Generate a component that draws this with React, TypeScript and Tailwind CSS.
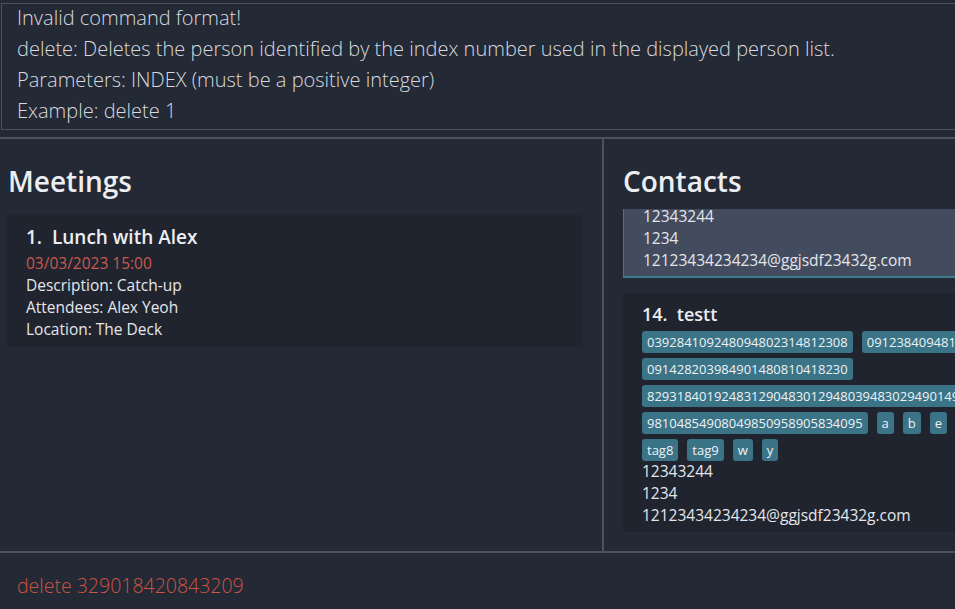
import React from 'react';

const resultLines = [
  'Invalid command format!',
  'delete: Deletes the person identified by the index number used in the displayed person list.',
  'Parameters: INDEX (must be a positive integer)',
  'Example: delete 1',
];

const tagRows: string[][] = [
  ['039284109248094802314812308', '09123840948123094812309481'],
  ['091428203984901480810418230'],
  ['82931840192483129048301294803948302949014923'],
  ['98104854908049850958905834095', 'a', 'b', 'e', 'f'],
  ['tag8', 'tag9', 'w', 'y'],
];

function Tag({ label }: { label: string }) {
  return (
    <span className="shrink-0 rounded-[3px] bg-[#3b7387] px-[5px] text-[13px] leading-[22px] text-[#eef2f4]">
      {label}
    </span>
  );
}

export default function App() {
  return (
    <div className="flex h-[609px] w-[955px] flex-col overflow-hidden bg-[#242936] font-['Open_Sans',sans-serif] text-[#e4e6ea]">
      {/* Result display */}
      <div className="h-[137px] shrink-0 pl-[1px] pt-[3px]">
        <div className="h-[127px] overflow-hidden border-y border-l border-[#4a505c] pl-[15px]">
          <div className="-mt-[2px] text-[20px] font-light leading-[31px] text-[#d8dade]">
            {resultLines.map((line) => (
              <div key={line} className="whitespace-nowrap">
                {line}
              </div>
            ))}
          </div>
        </div>
      </div>

      <div className="h-[2px] shrink-0 bg-[#4b515d]" />

      <div className="flex h-[412px] shrink-0">
        {/* Meetings */}
        <div className="w-[602px] shrink-0">
          <h2 className="pl-[8px] pt-[24px] text-[28px] font-semibold leading-[36px] text-[#eceef1]">
            Meetings
          </h2>
          <div className="ml-[7px] mt-[16px] w-[576px] bg-[#20242f] pb-[7px] pl-[19px] pt-[10px]">
            <div className="whitespace-pre text-[19px] font-semibold leading-[24px] text-[#eceef1]">
              {'1.  Lunch with Alex'}
            </div>
            <div className="mt-[3px] text-[15.5px] leading-[22px]">
              <div className="text-[#c95a4a]">03/03/2023 15:00</div>
              <div>Description: Catch-up</div>
              <div>Attendees: Alex Yeoh</div>
              <div>Location: The Deck</div>
            </div>
          </div>
        </div>

        <div className="w-[2px] shrink-0 bg-[#4b515d]" />

        {/* Contacts */}
        <div className="flex min-w-0 flex-1 flex-col pl-[19px]">
          <h2 className="pt-[24px] text-[28px] font-semibold leading-[36px] text-[#eceef1]">
            Contacts
          </h2>
          <div className="mt-[10px] min-h-0 flex-1 overflow-hidden">
            <div className="-mt-[4px] w-[420px] border-b-2 border-l border-[#3d7a8c] bg-[#434c5e] pb-[5px] pl-[19px] text-[15.5px] leading-[22px]">
              <div>12343244</div>
              <div>1234</div>
              <div>12123434234234@ggjsdf23432g.com</div>
            </div>

            <div className="mt-[15px] w-[420px] bg-[#20242f] pb-[6px] pl-[19px] pt-[9px]">
              <div className="whitespace-pre text-[18px] font-semibold leading-[24px] text-[#eceef1]">
                {'14.  testt'}
              </div>
              <div className="mt-[5px] flex flex-col gap-[5px]">
                {tagRows.map((row, i) => (
                  <div key={i} className="flex gap-[9px] overflow-hidden whitespace-nowrap">
                    {row.map((t) => (
                      <Tag key={t} label={t} />
                    ))}
                  </div>
                ))}
              </div>
              <div className="-mt-[1px] text-[15.5px] leading-[22px]">
                <div>12343244</div>
                <div>1234</div>
                <div>12123434234234@ggjsdf23432g.com</div>
              </div>
            </div>
          </div>
        </div>
      </div>

      <div className="h-[2px] shrink-0 bg-[#4b515d]" />

      {/* Command box */}
      <div className="flex-1 pl-[17px] pt-[19px]">
        <div className="text-[19.5px] font-light leading-[28px] text-[#cf5341]">delete 329018420843209</div>
      </div>
    </div>
  );
}
